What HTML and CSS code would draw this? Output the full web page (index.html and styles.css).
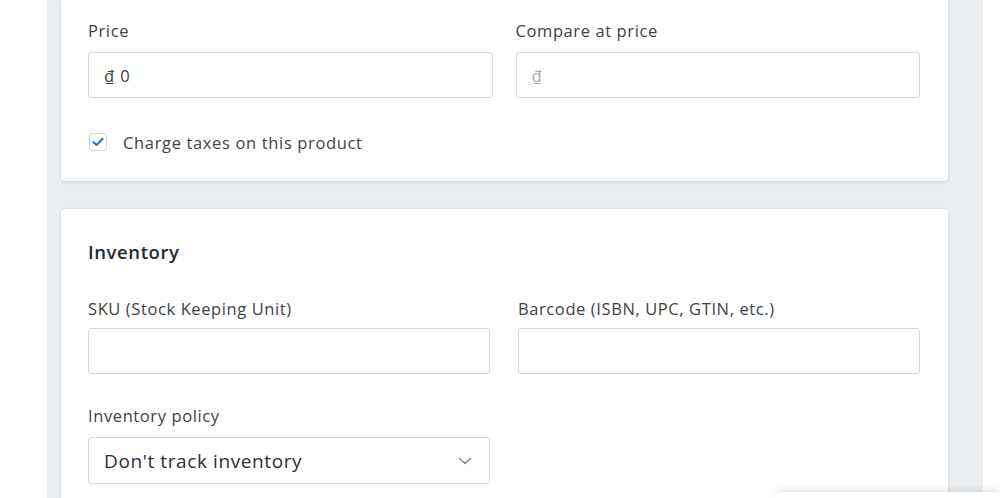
FILE: index.html
```html
<!DOCTYPE html>
<html>
<head>
<meta charset="utf-8">
<link rel="stylesheet" href="styles.css">
</head>
<body>
<div class="page">
  <section class="card card-pricing">
    <div class="row row-pricing">
      <div class="field">
        <label class="label">Price</label>
        <div class="input"><span class="currency">₫</span><span class="value">0</span></div>
      </div>
      <div class="field">
        <label class="label">Compare at price</label>
        <div class="input"><span class="currency muted">₫</span></div>
      </div>
    </div>
    <div class="check-row">
      <span class="checkbox">
        <svg width="12" height="10" viewBox="0 0 12 10"><path d="M1.5 5.2 L4.6 8 L10.5 1.8" fill="none" stroke="#2c6ecb" stroke-width="2.2" stroke-linecap="round" stroke-linejoin="round"/></svg>
      </span>
      <span class="check-label">Charge taxes on this product</span>
    </div>
  </section>

  <section class="card card-inventory">
    <h2 class="heading">Inventory</h2>
    <div class="row row-inventory">
      <div class="field">
        <label class="label">SKU (Stock Keeping Unit)</label>
        <div class="input"></div>
      </div>
      <div class="field">
        <label class="label">Barcode (ISBN, UPC, GTIN, etc.)</label>
        <div class="input"></div>
      </div>
    </div>
    <div class="row row-inventory policy-row">
      <div class="field">
        <label class="label">Inventory policy</label>
        <div class="select">
          <span class="select-value">Don't track inventory</span>
          <svg class="chevron" width="14" height="8" viewBox="0 0 14 8"><path d="M1.5 1.5 L7 6.5 L12.5 1.5" fill="none" stroke="#7f8a94" stroke-width="1.6" stroke-linecap="round" stroke-linejoin="round"/></svg>
        </div>
      </div>
      <div></div>
    </div>
  </section>
</div>
<div class="toast"></div>
</body>
</html>
```

FILE: styles.css
```css
html, body {
  margin: 0;
  padding: 0;
  background: #ffffff;
  overflow: hidden;
}
body {
  width: 1000px;
  height: 498px;
  font-family: "Open Sans", "Noto Sans", sans-serif;
  color: #3a3f45;
  position: relative;
}
.page {
  margin-left: 47px;
  width: 936px;
  height: 498px;
  background: #ebeef1;
  padding: 0 35px 0 14px;
  box-sizing: border-box;
  overflow: hidden;
}
.card {
  background: #ffffff;
  border-radius: 4px;
  box-shadow: 0 0 0 1px rgba(63,63,68,0.04), 0 1px 3px rgba(63,63,68,0.15);
  padding: 0 28px 0 27px;
}
.card-pricing {
  padding-top: 20px;
  padding-bottom: 28px;
  border-top-left-radius: 0;
  border-top-right-radius: 0;
}
.card-inventory {
  margin-top: 28px;
  padding-top: 31px;
  height: 289px;
  box-sizing: border-box;
  border-bottom-left-radius: 0;
  border-bottom-right-radius: 0;
}
.row {
  display: grid;
  grid-template-columns: 1fr 1fr;
}
.row-pricing { column-gap: 23px; }
.row-inventory { column-gap: 28px; }
.label {
  display: block;
  font-size: 16.5px;
  letter-spacing: 0.6px;
  line-height: 22px;
  color: #3d4248;
  margin-bottom: 10px;
}
.row-inventory .label { margin-bottom: 8px; }
.policy-row .label { margin-bottom: 10px; }
.input {
  height: 46px;
  box-sizing: border-box;
  border: 1px solid #d3d8dd;
  border-radius: 3px;
  display: flex;
  align-items: center;
  padding-left: 15px;
  font-size: 16.5px;
  color: #3a3f45;
}
.currency {
  text-decoration: underline;
  text-underline-offset: 2px;
  margin-right: 6px;
}
.currency.muted { color: #a7adb3; }
.check-row {
  margin-top: 33px;
  display: flex;
  align-items: center;
  height: 22px;
}
.checkbox {
  width: 18px;
  height: 18px;
  box-sizing: border-box;
  border: 1px solid #cfd5db;
  border-radius: 3px;
  display: flex;
  align-items: center;
  justify-content: center;
  margin-left: 1px;
  margin-right: 16px;
}
.check-label {
  font-size: 16.5px;
  letter-spacing: 0.65px;
  color: #40454b;
}
.heading {
  margin: 0;
  font-size: 18.5px;
  letter-spacing: 0.6px;
  line-height: 24px;
  font-weight: 600;
  color: #24292e;
}
.row-inventory { margin-top: 34px; }
.policy-row { margin-top: 31px; }
.select {
  height: 47px;
  box-sizing: border-box;
  border: 1px solid #d3d8dd;
  border-radius: 3px;
  display: flex;
  align-items: center;
  justify-content: space-between;
  padding: 0 17px 0 15px;
}
.select-value {
  font-size: 19px;
  letter-spacing: 0.6px;
  color: #2b3035;
}
.toast {
  position: absolute;
  left: 775px;
  top: 492px;
  width: 225px;
  height: 6px;
  background: #ffffff;
  box-shadow: 0 -2px 6px rgba(0,0,0,0.12);
  border-radius: 6px 0 0 0;
}
```
